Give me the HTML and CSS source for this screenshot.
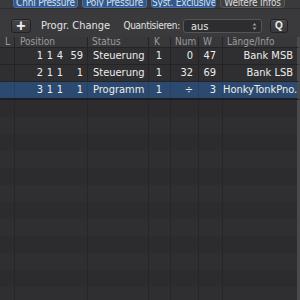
FILE: index.html
```html
<!DOCTYPE html>
<html lang="de">
<head>
    <meta charset="UTF-8">
    <title>Event-Liste</title>
    <link rel="stylesheet" href="styles.css">
</head>
<body>
    <div class="panel">
        <div class="tabs">
            <div class="tab blue">Chnl Pressure</div>
            <div class="tab blue">Poly Pressure</div>
            <div class="tab blue">Syst. Exclusive</div>
            <div class="tab">Weitere Infos</div>
        </div>

        <div class="toolbar">
            <div class="btn plus">+</div>
            <span class="label">Progr. Change</span>
            <span class="label quant">Quantisieren:</span>
            <div class="select">
                <span>aus</span>
                <span class="arrows">
                    <svg width="5" height="9" viewBox="0 0 5 9"><path d="M0.5 3.5 L2.5 1 L4.5 3.5 Z M0.5 5.5 L2.5 8 L4.5 5.5 Z" fill="#9a9a9a"/></svg>
                </span>
            </div>
            <div class="btn q">Q</div>
        </div>

        <div class="row head">
            <div class="c">L</div>
            <div class="c">Position</div>
            <div class="c">Status</div>
            <div class="c">K</div>
            <div class="c">Num</div>
            <div class="c">W</div>
            <div class="c">Länge/Info</div>
        </div>

        <div class="row data">
            <div class="c"></div>
            <div class="c pos"><span>1</span><span>1</span><span>4</span><span>59</span></div>
            <div class="c">Steuerung</div>
            <div class="c r k">1</div>
            <div class="c r num">0</div>
            <div class="c r w">47</div>
            <div class="c r info">Bank MSB</div>
        </div>
        <div class="row data">
            <div class="c"></div>
            <div class="c pos"><span>2</span><span>1</span><span>1</span><span>1</span></div>
            <div class="c">Steuerung</div>
            <div class="c r k">1</div>
            <div class="c r num">32</div>
            <div class="c r w">69</div>
            <div class="c r info">Bank LSB</div>
        </div>
        <div class="row data sel">
            <div class="c"></div>
            <div class="c pos"><span>3</span><span>1</span><span>1</span><span>1</span></div>
            <div class="c">Programm</div>
            <div class="c r k">1</div>
            <div class="c r num">÷</div>
            <div class="c r w">3</div>
            <div class="c r info">HonkyTonkPno.</div>
        </div>

        <div class="row filler">
            <div class="c"></div>
            <div class="c"></div>
            <div class="c"></div>
            <div class="c"></div>
            <div class="c"></div>
            <div class="c"></div>
            <div class="c"></div>
        </div>
    </div>
</body>
</html>
```

FILE: styles.css
```css
:root {
    --bg-top: #3a3a3c;
    --bg-row: #2f2f31;
    --bg-empty: #2c2c2e;
    --bg-sel: #2c4a6f;
    --line: #242426;
    --text: #ececec;
    --text-dim: #9c9c9c;
}

body {
    margin: 0;
    background: var(--bg-empty);
    font-family: "Liberation Sans Narrow", "DejaVu Sans Condensed", "Liberation Sans", sans-serif;
    font-size: 11px;
    color: var(--text);
}

.panel {
    width: 300px;
    height: 300px;
    overflow: hidden;
    display: flex;
    flex-direction: column;
    background: var(--bg-top);
}

/* top tab buttons, scrolled half out of view */
.tabs {
    height: 8px;
    overflow: hidden;
    display: flex;
    align-items: flex-end;
    gap: 4px;
    padding-left: 13px;
    border-bottom: 1px solid #2e2e30;
}

.tab {
    flex: none;
    width: 65px;
    height: 14px;
    box-sizing: border-box;
    padding-top: 3px;
    line-height: 10px;
    text-align: center;
    white-space: nowrap;
    overflow: hidden;
    font-size: 10px;
    letter-spacing: -0.2px;
    color: #dcdcdc;
    background: #414143;
    border: 1px solid #5a5a5c;
    border-radius: 3px;
}
.tab.blue {
    color: #d4e0f0;
    background: #33598a;
    border-color: #4a72a6;
}

.toolbar {
    height: 28px;
    display: flex;
    align-items: flex-start;
    padding: 10px 0 0 11px;
    box-sizing: border-box;
}

.btn {
    flex: none;
    height: 14px;
    box-sizing: border-box;
    border: 1px solid #232325;
    border-radius: 3px;
    background: linear-gradient(#444446, #39393b);
    box-shadow: inset 0 1px 0 #555557;
    text-align: center;
    color: #f0f0f0;
}
.plus {
    width: 20px;
    font-family: "Liberation Sans", sans-serif;
    font-size: 16px;
    line-height: 11px;
    font-weight: bold;
}
.q {
    width: 18px;
    margin-left: 8px;
    font-family: "Liberation Sans", sans-serif;
    font-size: 10px;
    line-height: 12px;
    font-weight: bold;
}

.label {
    flex: none;
    line-height: 14px;
    margin-left: 10px;
    color: #e2e2e2;
}
.quant {
    margin-left: auto;
    font-size: 10px;
    letter-spacing: -0.3px;
}

.select {
    flex: none;
    width: 79px;
    height: 14px;
    margin-left: 3px;
    box-sizing: border-box;
    display: flex;
    justify-content: space-between;
    align-items: center;
    padding: 0 4px 0 7px;
    border: 1px solid #555557;
    border-radius: 3px;
    background: #2d2d2f;
    color: #e6e6e6;
}
.arrows {
    display: flex;
}
.toolbar .q {
    margin-right: 12px;
}

/* table */
.row {
    display: grid;
    grid-template-columns: 15px 73px 61px 22px 28px 24px 74px;
    border-right: 3px solid #4a4a4c;
}

.c {
    border-right: 1px solid var(--line);
    white-space: nowrap;
    overflow: hidden;
    padding-left: 4px;
}
.c:last-child {
    border-right: 0;
}
.r {
    text-align: right;
    padding-left: 0;
}

.head {
    height: 10px;
    line-height: 10px;
    font-size: 10px;
    color: var(--text-dim);
    background: #38383a;
    border-bottom: 1px solid var(--line);
}
.head .c:nth-child(1) {
    padding-left: 5px;
}
.head .c:nth-child(2),
.head .c:nth-child(4) {
    padding-left: 5px;
}

.data {
    height: 16px;
    line-height: 16px;
    background: var(--bg-row);
    border-bottom: 1px solid var(--line);
}
.data .c:nth-child(3) {
    padding-left: 5px;
}
.data.sel {
    background: var(--bg-sel);
    border-bottom: 2px solid #1f1f21;
}
.data.sel .c {
    border-right-color: #27415f;
}

.pos {
    display: flex;
    padding-left: 10px;
}
.pos span {
    width: 10px;
    text-align: right;
}
.pos span:first-child {
    width: 18px;
}
.pos span:last-child {
    width: 20px;
}

.k { padding-right: 8px; }
.num { padding-right: 5px; }
.w { padding-right: 6px; }
.info { padding-right: 4px; }

.filler {
    flex: 1;
    background: repeating-linear-gradient(var(--bg-empty) 0 17px, #2f2f31 17px 34px);
}
.filler .c {
    border-right-color: #262628;
}
```
